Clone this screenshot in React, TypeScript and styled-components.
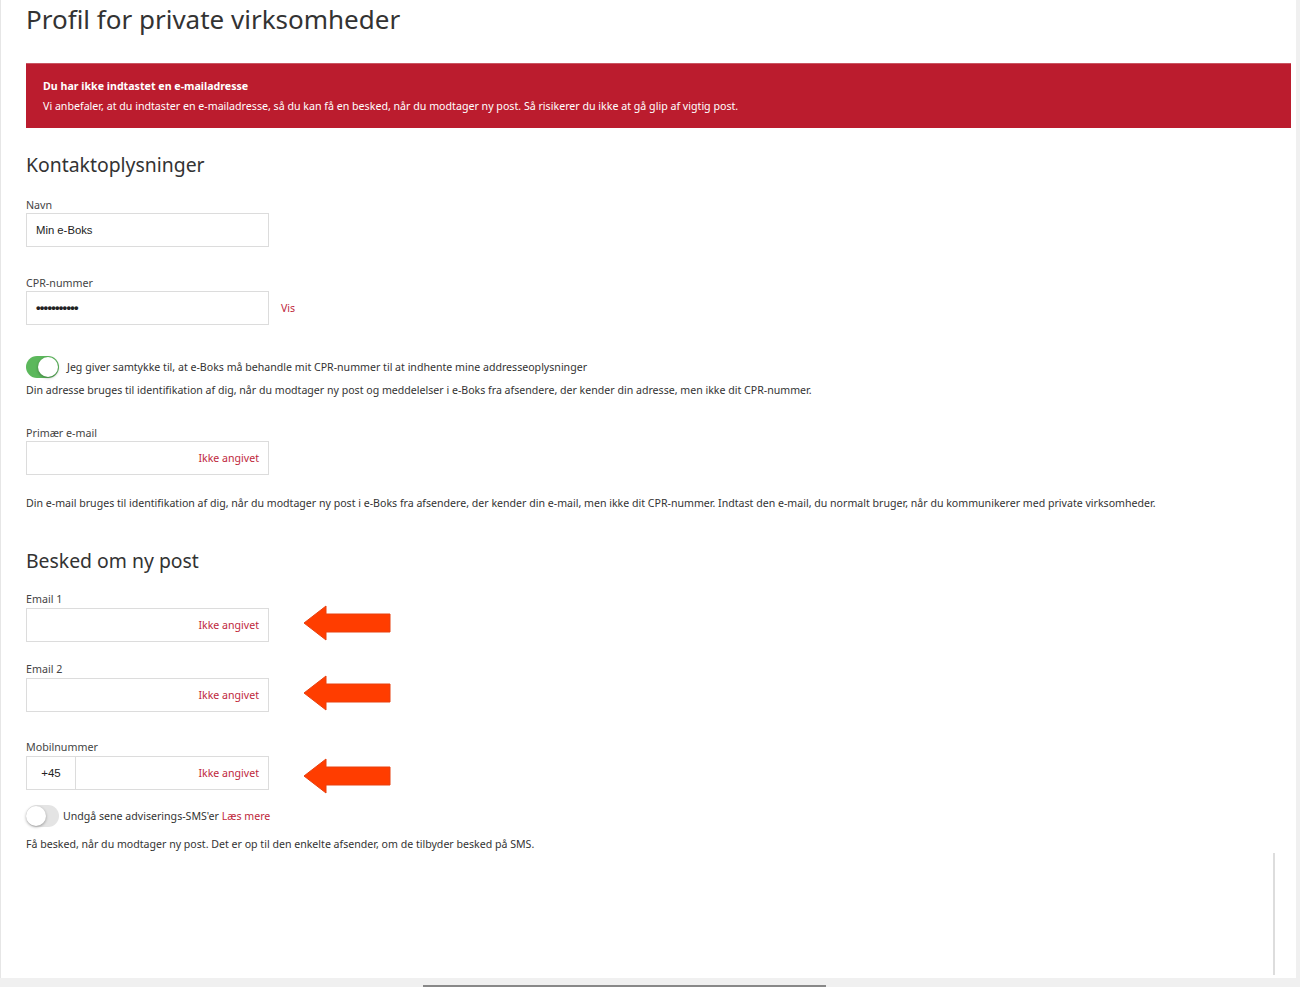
import styled, { createGlobalStyle } from "styled-components";

const GlobalStyle = createGlobalStyle`
    html, body {
        margin: 0;
        padding: 0;
        background: #ffffff;
    }
    body {
        font-family: "Noto Sans", "Open Sans", sans-serif;
        color: #333333;
    }
`;

const Window = styled.div`
    width: 1300px;
    height: 987px;
    display: flex;
    flex-direction: column;
    overflow: hidden;
    background: #f0f0f0;
`;

const Viewport = styled.div`
    flex: 1;
    display: flex;
    min-height: 0;
`;

const Page = styled.div`
    position: relative;
    flex: 1;
    background: #ffffff;
    border-left: 1px solid #e6e6e6;
    padding: 0 5px 0 25px;
    overflow: hidden;
`;

const RightGutter = styled.div`
    width: 4px;
    background: #f0f0f0;
`;

const BottomBar = styled.div`
    height: 9px;
    display: flex;
    align-items: flex-end;
    background: #f0f0f0;
`;

const ScrollThumb = styled.div`
    margin-left: 423px;
    width: 403px;
    height: 2px;
    background: #888888;
`;

const InnerTrack = styled.div`
    position: absolute;
    right: 21px;
    bottom: 3px;
    width: 2px;
    height: 122px;
    background: #dddddd;
`;

const Title = styled.h1`
    margin: 0;
    padding-top: 1px;
    font-size: 26px;
    font-weight: 400;
    line-height: 36px;
    color: #333333;
`;

const Banner = styled.div`
    margin-top: 26px;
    height: 65px;
    box-sizing: border-box;
    padding: 12px 17px 0;
    background: #bb1c2e;
    border-top: 1px solid #c95562;
    color: #ffffff;
    font-size: 10.65px;
    line-height: 20px;
`;

const BannerTitle = styled.div`
    font-weight: 700;
`;

const SectionTitle = styled.h2<{ $top: number }>`
    margin: ${(p) => p.$top}px 0 0;
    font-size: 19.4px;
    font-weight: 400;
    line-height: 28px;
    color: #333333;
`;

const Field = styled.div<{ $top: number }>`
    margin-top: ${(p) => p.$top}px;
`;

const Label = styled.div`
    font-size: 10.7px;
    line-height: 14px;
    color: #444444;
    margin-bottom: 1px;
`;

const Row = styled.div`
    display: flex;
    align-items: center;
`;

const Input = styled.div`
    width: 243px;
    height: 34px;
    box-sizing: border-box;
    border: 1px solid #dcdcdc;
    display: flex;
    align-items: center;
    justify-content: space-between;
    padding: 0 9px;
    font-family: "Liberation Sans", Arial, sans-serif;
    font-size: 11.3px;
    color: #222222;
`;

const Masked = styled.span`
    font-size: 13px;
    letter-spacing: -0.75px;
    font-weight: 700;
    position: relative;
    top: -1px;
`;

const Placeholder = styled.span`
    margin-left: auto;
    font-family: "Noto Sans", sans-serif;
    font-size: 10.6px;
    color: #c0283c;
`;

const PhoneInput = styled.div`
    width: 243px;
    height: 34px;
    box-sizing: border-box;
    border: 1px solid #dcdcdc;
    display: flex;
`;

const Prefix = styled.div`
    width: 48px;
    border-right: 1px solid #dcdcdc;
    display: flex;
    align-items: center;
    justify-content: center;
    font-family: "Liberation Sans", Arial, sans-serif;
    font-size: 11.5px;
    color: #222222;
`;

const PhoneValue = styled.div`
    flex: 1;
    display: flex;
    align-items: center;
    padding: 0 9px;
`;

const LinkText = styled.span`
    color: #c0283c;
    font-size: 10.6px;
`;

const VisLink = styled(LinkText)`
    margin-left: 12px;
`;

const Toggle = styled.div<{ $on: boolean }>`
    position: relative;
    width: 33px;
    height: 22px;
    border-radius: 11px;
    background: ${(p) => (p.$on ? "#5cb85c" : "#e4e4e4")};
    flex-shrink: 0;
`;

const Knob = styled.span<{ $on: boolean }>`
    position: absolute;
    top: 1px;
    left: ${(p) => (p.$on ? "12px" : "0px")};
    width: 20px;
    height: 20px;
    border-radius: 50%;
    background: #ffffff;
    box-shadow: 0 1px 3px rgba(0, 0, 0, 0.35);
`;

const ToggleRow = styled.div<{ $top: number; $gap: number }>`
    margin-top: ${(p) => p.$top}px;
    display: flex;
    align-items: center;
    gap: ${(p) => p.$gap}px;
    font-size: 10.6px;
    color: #333333;
`;

const Note = styled.p<{ $top: number }>`
    margin: ${(p) => p.$top}px 0 0;
    font-size: 10.6px;
    line-height: 14px;
    color: #333333;
`;

const ArrowWrap = styled.div<{ $shift: number }>`
    margin-left: 34px;
    width: 88px;
    height: 36px;
    display: flex;
    transform: translateY(${(p) => p.$shift}px);
`;

const Arrow = ({ shift = 0 }: { shift?: number }) => (
    <ArrowWrap $shift={shift}>
        <svg width="88" height="36" viewBox="0 0 88 36">
            <polygon
                points="1,18 23,1 23,9 87,9 87,27 23,27 23,35"
                fill="#ff3d00"
                stroke="#e8400f"
                strokeWidth="1"
            />
        </svg>
    </ArrowWrap>
);

const App = () => {
    return (
        <>
            <GlobalStyle />
            <Window>
                <Viewport>
                    <Page>
                        <Title>Profil for private virksomheder</Title>

                        <Banner>
                            <BannerTitle>Du har ikke indtastet en e-mailadresse</BannerTitle>
                            <div>
                                Vi anbefaler, at du indtaster en e-mailadresse, så du kan få en besked, når du modtager ny post. Så risikerer du ikke at gå glip af vigtig post.
                            </div>
                        </Banner>

                        <SectionTitle $top={23}>Kontaktoplysninger</SectionTitle>

                        <Field $top={19}>
                            <Label>Navn</Label>
                            <Input>Min e-Boks</Input>
                        </Field>

                        <Field $top={29}>
                            <Label>CPR-nummer</Label>
                            <Row>
                                <Input>
                                    <Masked>•••••••••••</Masked>
                                </Input>
                                <VisLink>Vis</VisLink>
                            </Row>
                        </Field>

                        <ToggleRow $top={31} $gap={8}>
                            <Toggle $on>
                                <Knob $on />
                            </Toggle>
                            <span>Jeg giver samtykke til, at e-Boks må behandle mit CPR-nummer til at indhente mine addresseoplysninger</span>
                        </ToggleRow>
                        <Note $top={5}>
                            Din adresse bruges til identifikation af dig, når du modtager ny post og meddelelser i e-Boks fra afsendere, der kender din adresse, men ikke dit CPR-nummer.
                        </Note>

                        <Field $top={29}>
                            <Label>Primær e-mail</Label>
                            <Input>
                                <Placeholder>Ikke angivet</Placeholder>
                            </Input>
                        </Field>
                        <Note $top={21}>
                            Din e-mail bruges til identifikation af dig, når du modtager ny post i e-Boks fra afsendere, der kender din e-mail, men ikke dit CPR-nummer. Indtast den e-mail, du normalt bruger, når du kommunikerer med private virksomheder.
                        </Note>

                        <SectionTitle $top={37}>Besked om ny post</SectionTitle>

                        <Field $top={17}>
                            <Label>Email 1</Label>
                            <Row>
                                <Input>
                                    <Placeholder>Ikke angivet</Placeholder>
                                </Input>
                                <Arrow shift={-2} />
                            </Row>
                        </Field>

                        <Field $top={19}>
                            <Label>Email 2</Label>
                            <Row>
                                <Input>
                                    <Placeholder>Ikke angivet</Placeholder>
                                </Input>
                                <Arrow shift={-2} />
                            </Row>
                        </Field>

                        <Field $top={27}>
                            <Label>Mobilnummer</Label>
                            <Row>
                                <PhoneInput>
                                    <Prefix>+45</Prefix>
                                    <PhoneValue>
                                        <Placeholder>Ikke angivet</Placeholder>
                                    </PhoneValue>
                                </PhoneInput>
                                <Arrow shift={3} />
                            </Row>
                        </Field>

                        <ToggleRow $top={14} $gap={4}>
                            <Toggle $on={false}>
                                <Knob $on={false} />
                            </Toggle>
                            <span>
                                Undgå sene adviserings-SMS'er <LinkText>Læs mere</LinkText>
                            </span>
                        </ToggleRow>
                        <Note $top={10}>
                            Få besked, når du modtager ny post. Det er op til den enkelte afsender, om de tilbyder besked på SMS.
                        </Note>

                        <InnerTrack />
                    </Page>
                    <RightGutter />
                </Viewport>
                <BottomBar>
                    <ScrollThumb />
                </BottomBar>
            </Window>
        </>
    );
};

export default App;
